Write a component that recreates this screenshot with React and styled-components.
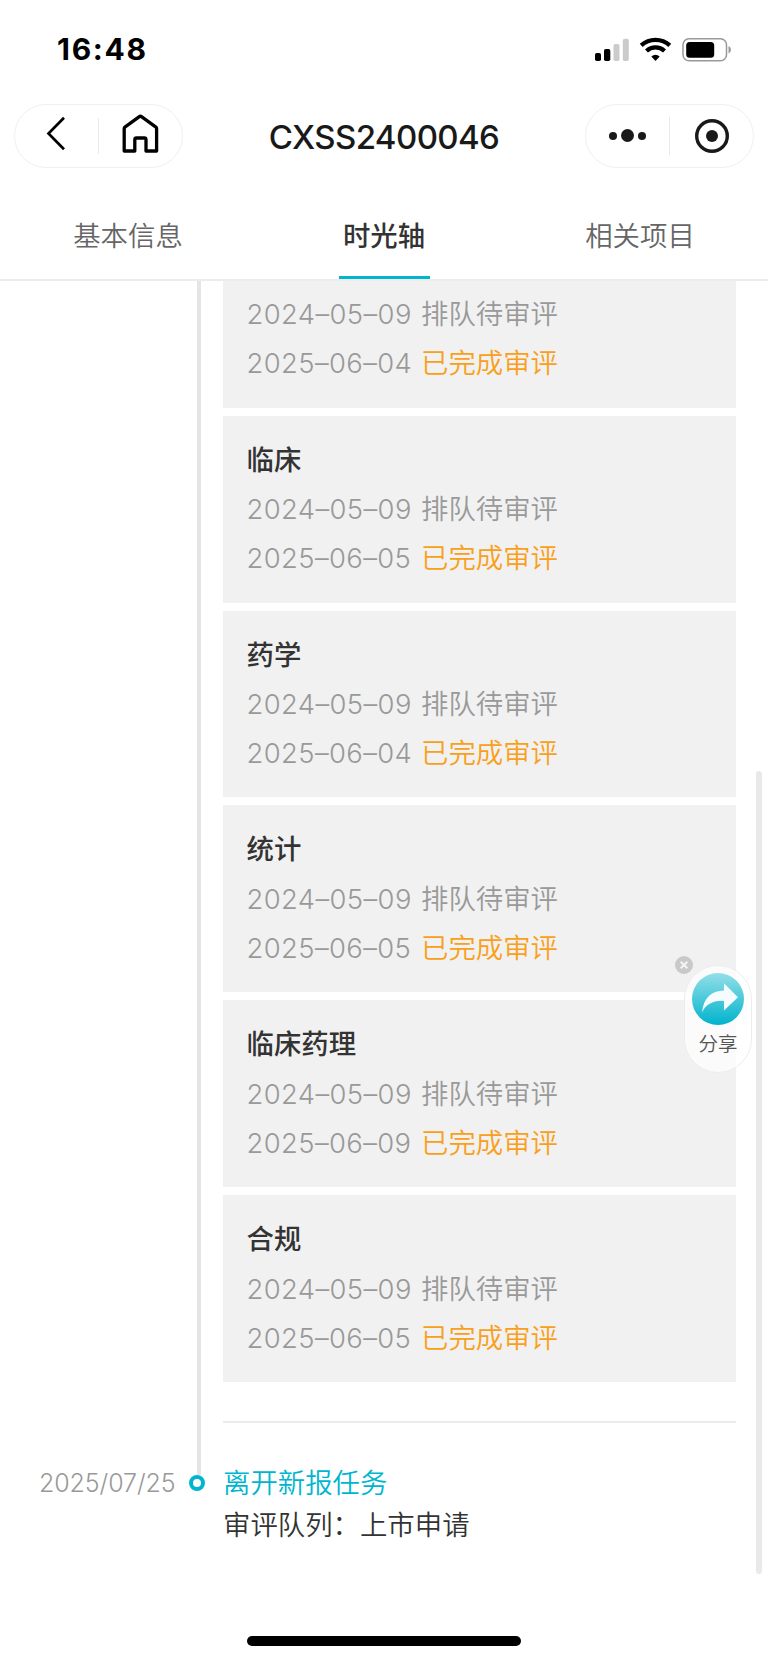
import React from "react";
import styled, { createGlobalStyle } from "styled-components";

const GlobalStyle = createGlobalStyle`
  *, *::before, *::after { box-sizing: border-box; }
  body {
    margin: 0;
    background: #fff;
    color: #333;
    font-family: Inter, "Noto Sans CJK SC", sans-serif;
    font-size: 27.4px;
    font-weight: 350;
  }
`;

const Screen = styled.div`
  position: relative;
  display: flex;
  flex-direction: column;
  width: 768px;
  height: 1663px;
  overflow: hidden;
  background: #fff;
`;

const StatusBar = styled.div`
  display: flex;
  align-items: center;
  justify-content: space-between;
  height: 104px;
  padding: 0 36px 6px 57px;
`;

const Clock = styled.span`
  color: #000;
  font-size: 30px;
  font-weight: 700;
  letter-spacing: 1.7px;
  line-height: 40px;
`;

const StatusIcons = styled.svg`
  display: block;
  width: 138px;
  height: 26px;
`;

const NavBar = styled.div`
  display: flex;
  justify-content: space-between;
  height: 64px;
  padding: 0 14px;
`;

const Capsule = styled.div`
  width: 169px;
  height: 64px;
  border: 1px solid #f0f0f0;
  border-radius: 32px;

  svg {
    display: block;
    margin: -1px;
  }
`;

const Title = styled.h1`
  margin: 0;
  color: #191919;
  font-size: 33px;
  font-weight: 500;
  letter-spacing: -0.6px;
  line-height: 66px;
`;

const Tabs = styled.nav`
  display: flex;
  height: 113px;
  padding-top: 41px;
  border-bottom: 2px solid #ececec;
`;

const Tab = styled.div`
  display: flex;
  flex: 1;
  flex-direction: column;
  align-items: center;
  justify-content: space-between;
  color: ${(p) => (p.$active ? "#333" : "#666")};
  font-weight: ${(p) => (p.$active ? 500 : 350)};
  line-height: 54px;

  &::after {
    content: "";
    width: 91px;
    height: 3px;
    background: ${(p) => (p.$active ? "#00b6cf" : "transparent")};
  }
`;

const Timeline = styled.main`
  flex: 1;
  overflow: hidden;
`;

const Entry = styled.section`
  display: grid;
  grid-template-columns: 197px 4px 535px;
`;

const Rail = styled.div`
  grid-column: 2;
  background: #e5e5e5;
`;

const Reviews = styled.div`
  display: flex;
  flex-direction: column;
  gap: 8px;
  margin-left: 22px;
  padding-bottom: 39px;
  border-bottom: 2px solid #ebebeb;
`;

const Card = styled.article`
  height: ${(p) => (p.$clipped ? "126.7px" : "186.9px")};
  padding: ${(p) => (p.$clipped ? "9px" : "20px")} 23.5px 0;
  background: #f1f1f1;
`;

const CardTitle = styled.h2`
  margin: 0;
  font-size: 27.4px;
  font-weight: 500;
  line-height: 49.3px;
`;

const Row = styled.div`
  display: flex;
  color: ${(p) => (p.$done ? "#f9a01b" : "#999")};
  line-height: 49.3px;
`;

const RowDate = styled.time`
  width: 174.5px;
  color: #999;
  font-weight: 300;
  letter-spacing: 0.4px;
`;

const LastEntry = styled.section`
  display: flex;
  height: 160px;
`;

const EntryDate = styled.time`
  width: 189px;
  padding: 40px 0 0 39px;
  color: #999;
  font-size: 25px;
  font-weight: 300;
  letter-spacing: -0.1px;
  line-height: 40px;
`;

const Marker = styled.div`
  display: flex;
  flex-direction: column;
  align-items: center;
  width: 16px;

  &::before {
    content: "";
    width: 4px;
    height: 52px;
    margin-left: 4px;
    background: #e5e5e5;
  }

  &::after {
    content: "";
    width: 16px;
    height: 16px;
    border: 4.5px solid #00b6cf;
    border-radius: 50%;
  }
`;

const EntryBody = styled.div`
  padding: 40px 0 0 18px;
  line-height: 41.6px;
`;

const EntryTitle = styled.div`
  color: #00b6cf;
`;

const ScrollThumb = styled.div`
  position: absolute;
  top: 771px;
  left: 756px;
  width: 6px;
  height: 803px;
  border-radius: 3px;
  background: #e9e9e9;
`;

const HomeIndicator = styled.div`
  position: absolute;
  top: 1636px;
  left: 247px;
  width: 274px;
  height: 10px;
  border-radius: 5px;
  background: #000;
`;

const Share = styled.button`
  position: absolute;
  top: 965px;
  left: 684px;
  display: flex;
  flex-direction: column;
  align-items: center;
  width: 68px;
  height: 108px;
  padding: 7px 0 0;
  border: 1px solid #ededed;
  border-radius: 34px;
  background: rgba(255, 255, 255, 0.72);
  color: #555;
  font: inherit;
  font-size: 19.5px;
  line-height: 38px;
`;

const Close = styled.svg`
  position: absolute;
  top: 956px;
  left: 674.5px;
`;

const reviews = [
  { end: "2025–06–04" },
  { name: "临床", end: "2025–06–05" },
  { name: "药学", end: "2025–06–04" },
  { name: "统计", end: "2025–06–05" },
  { name: "临床药理", end: "2025–06–09" },
  { name: "合规", end: "2025–06–05" },
];

function ReviewCard({ name, end }) {
  return (
    <Card $clipped={!name}>
      {name && <CardTitle>{name}</CardTitle>}
      <Row>
        <RowDate>2024–05–09</RowDate>
        <span>排队待审评</span>
      </Row>
      <Row $done>
        <RowDate>{end}</RowDate>
        <span>已完成审评</span>
      </Row>
    </Card>
  );
}

export default function App() {
  return (
    <>
      <GlobalStyle />
      <Screen>
        <StatusBar>
          <Clock>16:48</Clock>
          <StatusIcons viewBox="0 0 138 26">
            <rect x="1" y="17" width="6" height="8" rx="1.8" />
            <rect x="10" y="13" width="6.3" height="12" rx="1.8" />
            <rect x="19.5" y="8" width="6" height="17" rx="1.8" fill="#cbcbcb" />
            <rect x="28.8" y="2.8" width="6" height="22.2" rx="1.8" fill="#cbcbcb" />
            <g fill="none" stroke="#000" strokeWidth="4.2">
              <path d="M47.200 9.400a21 21 0 0 1 28.600 0" />
              <path d="M52.500 15a13 13 0 0 1 18 0" />
            </g>
            <path d="M57.300 20.600q4.200-3.800 8.400 0L61.500 25z" />
            <rect x="89" y="2.7" width="43.5" height="22" rx="6" fill="none" stroke="#999" strokeWidth="1.5" />
            <rect x="92.2" y="6" width="28" height="15.8" rx="3.5" />
            <path d="M134.5 10v7.5q2.5-1 2.5-3.7t-2.5-3.8z" fill="#999" />
          </StatusIcons>
        </StatusBar>

        <NavBar>
          <Capsule>
            <svg width="169" height="64" fill="none" stroke="#000">
              <path d="M50 13.7 34.5 29.5 50 45.3" strokeWidth="2.7" />
              <path d="M84.5 14v36" stroke="#e9e9e9" />
              <path
                d="M110.200 24.500q0-1 1-1.700L125 12.800q1.400-1 2.800 0l13.800 10q1 .7 1 1.700V47H132V35.700q0-1.700-1.700-1.700h-7.800q-1.700 0-1.700 1.700V47h-10.600z"
                strokeWidth="3.3"
                strokeLinejoin="round"
              />
            </svg>
          </Capsule>
          <Title>CXSS2400046</Title>
          <Capsule>
            <svg width="169" height="64" fill="#191919">
              <circle cx="28" cy="32" r="4" />
              <circle cx="42.5" cy="31.500" r="6.500" />
              <circle cx="57" cy="32" r="4" />
              <path d="M84.5 12.500v39" stroke="#e9e9e9" />
              <circle cx="127" cy="32" r="15.300" fill="none" stroke="#191919" strokeWidth="3.400" />
              <circle cx="127" cy="32" r="6" />
            </svg>
          </Capsule>
        </NavBar>

        <Tabs>
          <Tab>基本信息</Tab>
          <Tab $active>时光轴</Tab>
          <Tab>相关项目</Tab>
        </Tabs>

        <Timeline>
          <Entry>
            <Rail />
            <Reviews>
              {reviews.map((r, i) => (
                <ReviewCard key={i} {...r} />
              ))}
            </Reviews>
          </Entry>
          <LastEntry>
            <EntryDate>2025/07/25</EntryDate>
            <Marker />
            <EntryBody>
              <EntryTitle>离开新报任务</EntryTitle>
              <div>审评队列：上市申请</div>
            </EntryBody>
          </LastEntry>
        </Timeline>

        <ScrollThumb />
        <Share>
          <svg width="52" height="52" viewBox="0 0 52 52">
            <defs>
              <linearGradient id="shareFill" x1="0" y1="0" x2="0" y2="1">
                <stop offset="0" stopColor="#93dfe8" />
                <stop offset="1" stopColor="#00b3cd" />
              </linearGradient>
            </defs>
            <circle cx="26" cy="26" r="26" fill="url(#shareFill)" />
            <path d="M10 39.500C11.500 25 19 17.800 32 17.500V10.300L46 24.300 32 37.500V28C22 27 14 31 10 39.500z" fill="#f5fcfe" />
          </svg>
          分享
        </Share>
        <Close width="18" height="18">
          <circle cx="9" cy="9" r="9" fill="#c9c9c9" />
          <path d="m5.700 5.700 6.600 6.600m0-6.600-6.600 6.600" stroke="#f4f4f4" strokeWidth="2" />
        </Close>
        <HomeIndicator />
      </Screen>
    </>
  );
}
